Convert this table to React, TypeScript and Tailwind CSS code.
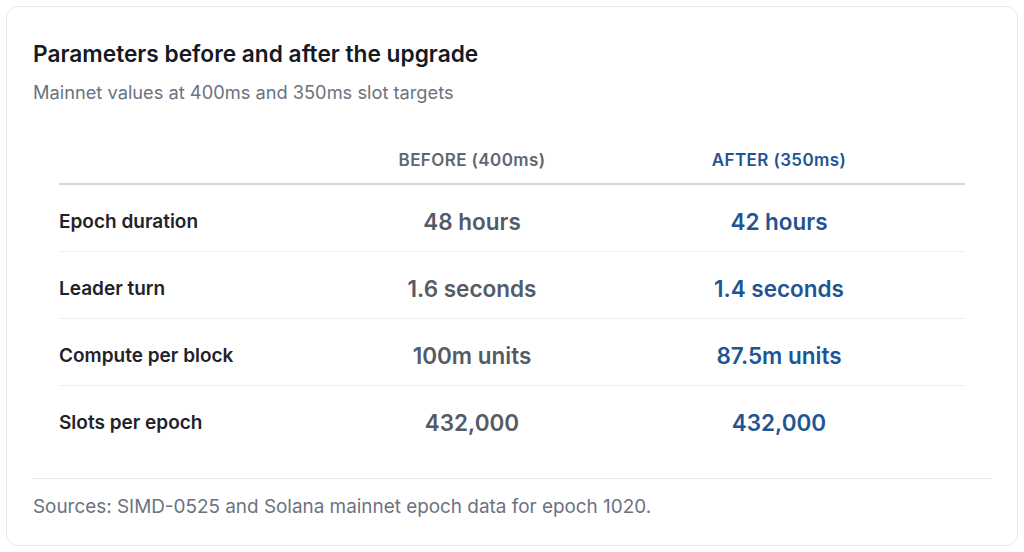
import React from "react";

const rows = [
  { label: "Epoch duration", before: "48 hours", after: "42 hours" },
  { label: "Leader turn", before: "1.6 seconds", after: "1.4 seconds" },
  { label: "Compute per block", before: "100m units", after: "87.5m units" },
  { label: "Slots per epoch", before: "432,000", after: "432,000" },
];

export default function App() {
  return (
    <div className="w-[1024px] h-[552px] bg-white p-[6px] font-['Inter','Noto_Sans',sans-serif]">
      <div className="h-[540px] w-[1012px] rounded-[12px] border border-[#e8e9ec] bg-white px-[26px] pt-[33px] flex flex-col">
        <h2 className="text-[22.7px] leading-[28px] font-semibold text-[#16191f]">
          Parameters before and after the upgrade
        </h2>
        <p className="mt-[12px] text-[18.25px] leading-[24px] text-[#6b7280]">
          Mainnet values at 400ms and 350ms slot targets
        </p>
        <div className="mx-[26px] mt-[46px]">
          <div className="grid grid-cols-[292px_242px_372px] border-b-2 border-[#d4d6dc] pb-[13px] text-[17px] leading-[20px] font-semibold tracking-[0.4px]">
            <div />
            <div className="text-center text-[#5f6673]">BEFORE (400ms)</div>
            <div className="text-center text-[#1f5593]">AFTER (350ms)</div>
          </div>
          {rows.map((r, i) => (
            <div
              key={r.label}
              className={
                i < rows.length - 1
                  ? "grid grid-cols-[292px_242px_372px] items-center border-b border-[#eeeff1] pt-[23px] pb-[15px]"
                  : "grid grid-cols-[292px_242px_372px] items-center pt-[23px] pb-[15px]"
              }
            >
              <div className="text-[19px] leading-[28px] font-semibold text-[#1f2329]">{r.label}</div>
              <div className="text-center text-[22.5px] leading-[28px] font-semibold text-[#545b67]">{r.before}</div>
              <div className="text-center text-[22.5px] leading-[28px] font-semibold text-[#1f5593]">{r.after}</div>
            </div>
          ))}
        </div>
        <div className="mt-[26px] border-t border-[#e8e9ec] pt-[16px]">
          <p className="text-[18.9px] leading-[24px] text-[#6b7280]">
            Sources: SIMD-0525 and Solana mainnet epoch data for epoch 1020.
          </p>
        </div>
      </div>
    </div>
  );
}
